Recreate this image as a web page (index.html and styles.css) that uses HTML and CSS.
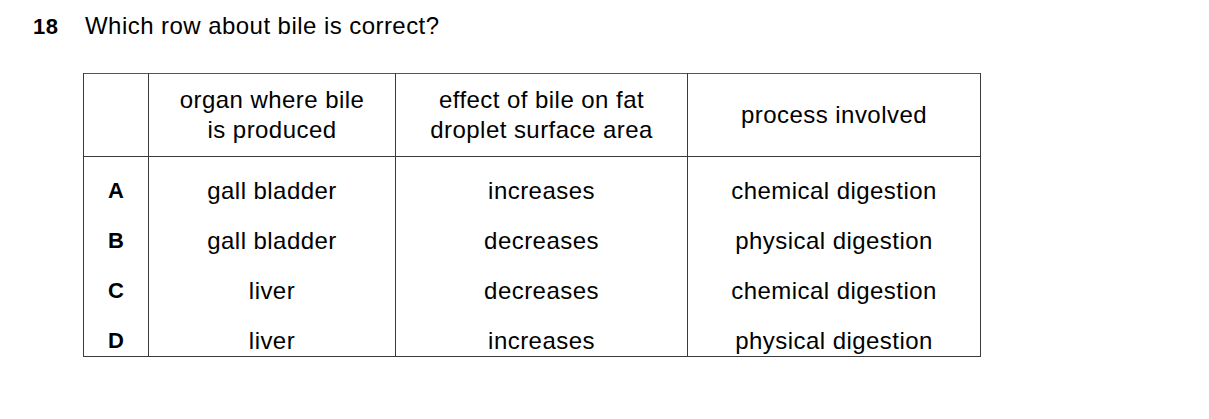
FILE: index.html
```html
<!DOCTYPE html>
<html lang="en">
<head>
<meta charset="utf-8">
<title>Question 18</title>
<link rel="stylesheet" href="styles.css">
</head>
<body>
<div class="question">
  <span class="qnum">18</span><span class="qtext">Which row about bile is correct?</span>
</div>
<table class="answers">
  <colgroup>
    <col class="c-letter">
    <col class="c-organ">
    <col class="c-effect">
    <col class="c-process">
  </colgroup>
  <thead>
    <tr>
      <th></th>
      <th>organ where bile<br>is produced</th>
      <th>effect of bile on fat<br>droplet surface area</th>
      <th>process involved</th>
    </tr>
  </thead>
  <tbody>
    <tr class="first">
      <td class="letter">A</td><td>gall bladder</td><td>increases</td><td>chemical digestion</td>
    </tr>
    <tr>
      <td class="letter">B</td><td>gall bladder</td><td>decreases</td><td>physical digestion</td>
    </tr>
    <tr>
      <td class="letter">C</td><td>liver</td><td>decreases</td><td>chemical digestion</td>
    </tr>
    <tr class="last">
      <td class="letter">D</td><td>liver</td><td>increases</td><td>physical digestion</td>
    </tr>
  </tbody>
</table>
</body>
</html>
```
FILE: styles.css
```css
html, body {
  margin: 0;
  padding: 0;
  background: #ffffff;
}

body {
  font-family: "Liberation Sans", Arial, sans-serif;
  font-size: 24px;
  letter-spacing: 0.45px;
  color: #000000;
}

.question {
  padding: 13px 0 0 33px;
  line-height: 26px;
  height: 26px;
}

.qnum {
  display: inline-block;
  width: 52px;
  font-size: 22px;
  letter-spacing: 0.5px;
  font-weight: bold;
}

.answers {
  margin: 34px 0 0 83px;
  border-collapse: collapse;
  table-layout: fixed;
  width: 897px;
  border: 1px solid #3a3a3a;
  border-top-color: #555555;
}

.c-letter { width: 65px; }
.c-organ { width: 247px; }
.c-effect { width: 292px; }
.c-process { width: 293px; }

.answers th,
.answers td {
  text-align: center;
  font-weight: normal;
  line-height: 30px;
  padding: 10px 0;
  border-left: 1px solid #3a3a3a;
  border-right: 1px solid #3a3a3a;
}

.answers thead th {
  height: 83px;
  padding: 0;
  box-sizing: border-box;
  border-bottom: 1px solid #3a3a3a;
  vertical-align: middle;
}

.answers tr.first td { padding-top: 19px; }
.answers tr.last td { padding-bottom: 0; }

.answers td.letter {
  font-size: 22px;
  letter-spacing: 0;
  font-weight: bold;
}
```
